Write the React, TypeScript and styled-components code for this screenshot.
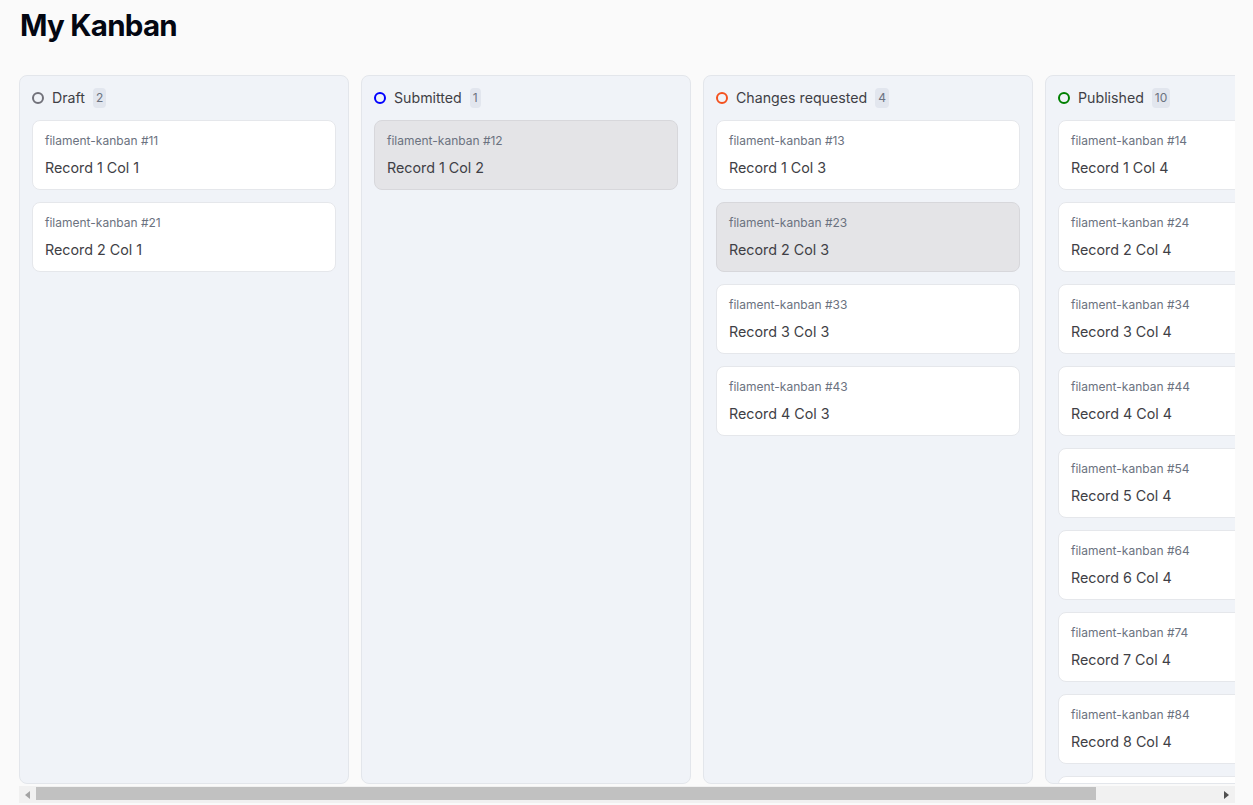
import React from "react";
import styled, { createGlobalStyle } from "styled-components";

const GlobalStyle = createGlobalStyle`
  html, body {
    margin: 0;
    padding: 0;
    background: #fafafa;
    font-family: Inter, "Noto Sans", sans-serif;
  }
  * { box-sizing: border-box; }
`;

const Page = styled.div`
  display: flex;
  flex-direction: column;
  gap: 32px;
  padding: 7px 18px 0 19px;
`;

const Title = styled.h1`
  margin: 0;
  font-size: 29.5px;
  line-height: 36px;
  font-weight: 700;
  letter-spacing: -0.025em;
  color: #030712;
  padding-left: 1px;
`;

const BoardWrap = styled.div`
  display: flex;
  flex-direction: column;
  gap: 2px;
`;

const Board = styled.div`
  display: flex;
  gap: 12px;
  overflow: hidden;
`;

const ScrollBar = styled.div`
  display: flex;
  height: 17px;
  background: #f1f1f1;
`;

const ScrollButton = styled.div`
  flex: 0 0 17px;
  display: flex;
  align-items: center;
  justify-content: center;
`;

const ScrollTrack = styled.div`
  flex: 1;
  display: flex;
  padding: 1px 0 3px;
`;

const ScrollThumb = styled.div`
  background: #c1c1c1;
  height: 100%;
`;

const Column = styled.section`
  flex: 0 0 330px;
  width: 330px;
  height: 709px;
  background: #f0f3f8;
  border: 1px solid #e3e6eb;
  border-radius: 8px;
  padding: 12px;
  display: flex;
  flex-direction: column;
  gap: 12px;
  overflow: hidden;
`;

const Header = styled.div`
  display: flex;
  align-items: center;
  height: 20px;
  gap: 8px;
`;

const Dot = styled.span<{ $color: string }>`
  width: 12px;
  height: 12px;
  border-radius: 50%;
  border: 2px solid ${(p) => p.$color};
  flex: 0 0 auto;
`;

const HeaderTitle = styled.span`
  font-size: 14.2px;
  font-weight: 400;
  color: #3f3f46;
  line-height: 20px;
`;

const Badge = styled.span`
  font-size: 12px;
  line-height: 20px;
  height: 20px;
  padding: 0 3px;
  border-radius: 4px;
  background: #e2e6ee;
  color: #6b7280;
`;

const CardList = styled.div`
  display: flex;
  flex-direction: column;
  gap: 12px;
`;

const Card = styled.div<{ $active?: boolean }>`
  background: ${(p) => (p.$active ? "#e4e4e7" : "#ffffff")};
  border: 1px solid ${(p) => (p.$active ? "#d7d7db" : "#e5e7eb")};
  border-radius: 8px;
  padding: 12px 12px 11px;
  display: flex;
  flex-direction: column;
  gap: 9px;
  flex: 0 0 auto;
`;

const CardMeta = styled.div`
  font-size: 12px;
  line-height: 16px;
  color: #6b7280;
`;

const CardTitle = styled.div`
  font-size: 14.3px;
  line-height: 20px;
  color: #3f3f46;
`;

type Col = {
  title: string;
  color: string;
  index: number;
  count: number;
  active?: number[];
};

const columns: Col[] = [
  { title: "Draft", color: "#71717a", index: 1, count: 2 },
  { title: "Submitted", color: "#0000ff", index: 2, count: 1, active: [1] },
  { title: "Changes requested", color: "#f4511e", index: 3, count: 4, active: [2] },
  { title: "Published", color: "#008000", index: 4, count: 10 },
];

const visibleWidth = 1216;
const contentWidth = columns.length * 330 + (columns.length - 1) * 12;
const thumbPercent = (visibleWidth / contentWidth) * 100;

export default function App() {
  return (
    <>
      <GlobalStyle />
      <Page>
        <Title>My Kanban</Title>
        <BoardWrap>
          <Board>
            {columns.map((c) => (
              <Column key={c.title}>
                <Header>
                  <Dot $color={c.color} />
                  <HeaderTitle>{c.title}</HeaderTitle>
                  <Badge>{c.count}</Badge>
                </Header>
                <CardList>
                  {Array.from({ length: c.count }, (_, i) => i + 1).map((n) => (
                    <Card key={n} $active={c.active?.includes(n)}>
                      <CardMeta>filament-kanban #{`${n}${c.index}`}</CardMeta>
                      <CardTitle>
                        Record {n} Col {c.index}
                      </CardTitle>
                    </Card>
                  ))}
                </CardList>
              </Column>
            ))}
          </Board>
          <ScrollBar>
            <ScrollButton>
              <svg width="5" height="8" viewBox="0 0 5 8">
                <path d="M0 4 L5 0 L5 8 Z" fill="#a3a3a3" />
              </svg>
            </ScrollButton>
            <ScrollTrack>
              <ScrollThumb style={{ width: `${thumbPercent}%` }} />
            </ScrollTrack>
            <ScrollButton>
              <svg width="5" height="8" viewBox="0 0 5 8">
                <path d="M5 4 L0 0 L0 8 Z" fill="#505050" />
              </svg>
            </ScrollButton>
          </ScrollBar>
        </BoardWrap>
      </Page>
    </>
  );
}
